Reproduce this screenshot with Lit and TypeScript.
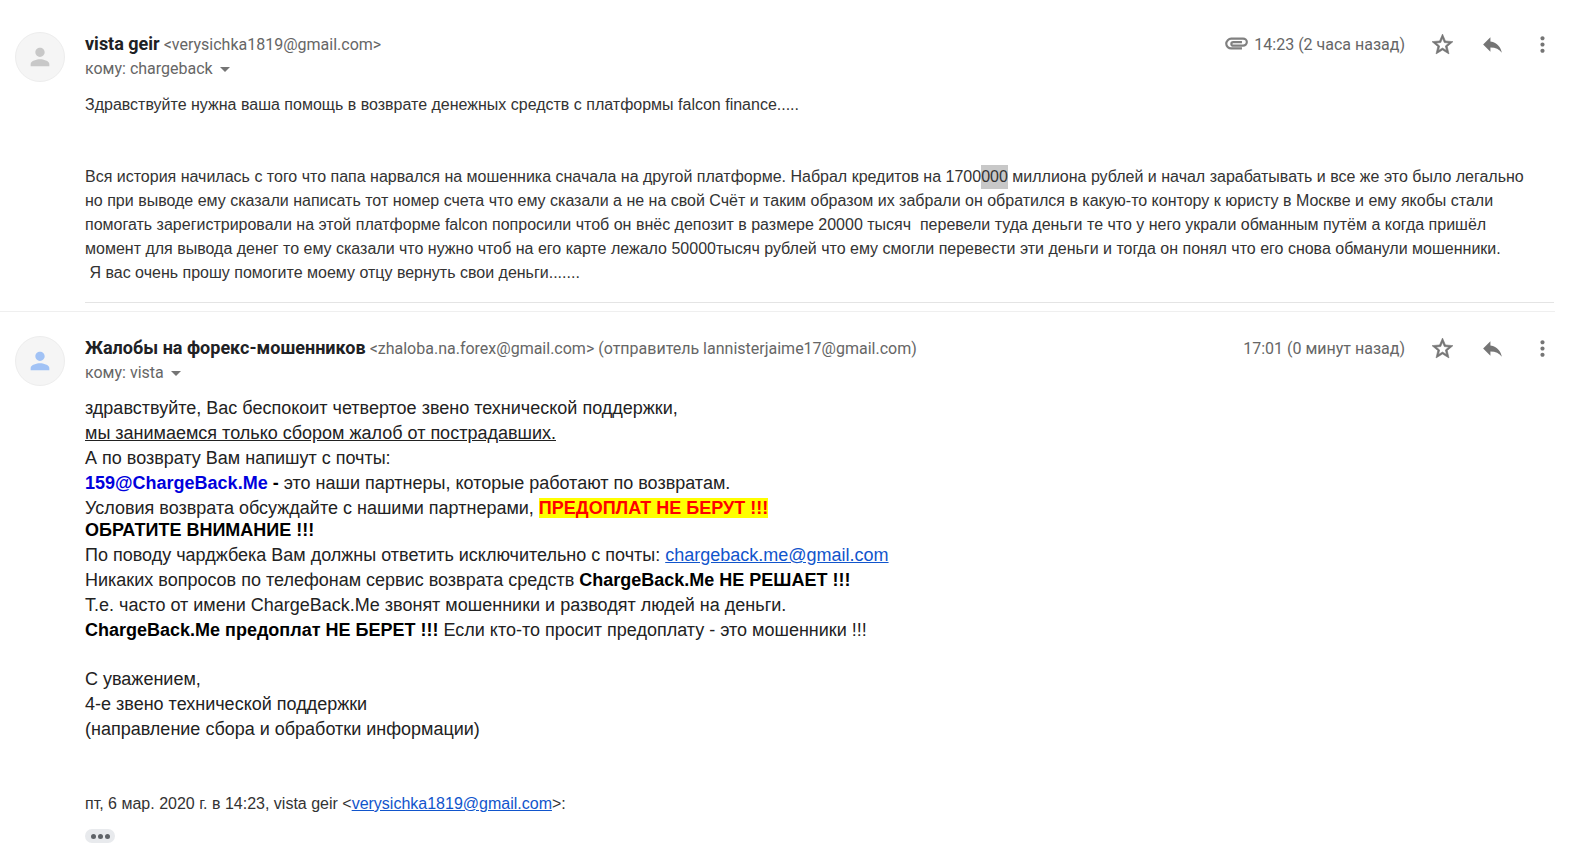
import { LitElement, html, css, svg, nothing } from "lit";
import { customElement, property } from "lit/decorators.js";

const icon = (d: string) => svg`<path d=${d}></path>`;
const STAR = "M22 9.24l-7.19-.62L12 2 9.19 8.63 2 9.24l5.46 4.73L5.82 21 12 17.27 18.18 21l-1.63-7.03L22 9.24zM12 15.4l-3.76 2.27 1-4.28-3.32-2.88 4.38-.38L12 6.1l1.71 4.04 4.38.38-3.32 2.88 1 4.28L12 15.4z";
const REPLY = "M10 9V5l-7 7 7 7v-4.1c5 0 8.5 1.6 11 5.1-1-5-4-10-11-11z";
const DOTS = "M12 8c1.1 0 2-.9 2-2s-.9-2-2-2-2 .9-2 2 .9 2 2 2zm0 2c-1.1 0-2 .9-2 2s.9 2 2 2 2-.9 2-2-.9-2-2-2zm0 6c-1.1 0-2 .9-2 2s.9 2 2 2 2-.9 2-2-.9-2-2-2z";
const CLIP = "M17.5 16H7.500C5.300 16 3 14.300 3 11.800S5.300 7 7.500 7H18.500c1.900 0 3.500 1.300 3.500 3.200s-1.600 3.300-3.500 3.300H9.500c-1 0-1.800-.7-1.800-1.600s.8-1.600 1.800-1.600H17.500";
const PERSON = "M12 12c2.210 0 4-1.790 4-4s-1.790-4-4-4-4 1.790-4 4 1.790 4 4 4zm0 2c-2.670 0-8 1.340-8 4v2h16v-2c0-2.660-5.330-4-8-4z";

@customElement("mail-message")
class MailMessage extends LitElement {
  @property() sender = "";
  @property() address = "";
  @property() to = "";
  @property() time = "";
  @property({ type: Boolean }) attachment = false;
  @property({ type: Boolean }) active = false;

  static styles = css`
    :host { display: block; }
    .message { display: grid; grid-template-columns: 50px minmax(0, 1fr); column-gap: 20px; padding-left: 15px; }
    .avatar { width: 50px; height: 50px; border-radius: 50%; background: #f5f5f5; display: grid; place-items: center; box-sizing: border-box; border: 1px solid #ededed; }
    .avatar svg { width: 28px; height: 28px; fill: #c8c8c8; }
    .avatar.active svg { fill: #a1c2f5; }
    .head { display: flex; padding-right: 6px; height: 48px; font-family: Roboto, sans-serif; color: #666; }
    .who { flex: 1; min-width: 0; }
    .row { line-height: 24px; font-size: 16px; display: flex; align-items: baseline; gap: 4px; }
    h3 { margin: 0; font-size: 18px; line-height: 24px; font-weight: 700; color: #202124; }
    .to { all: unset; display: flex; align-items: center; line-height: 24px; font-size: 16px; cursor: pointer; }
    .to svg { width: 24px; height: 24px; fill: #757575; }
    .meta { display: flex; align-items: center; height: 24px; font-size: 16px; }
    .clip { width: 26px; height: 26px; margin-right: 5px; fill: none; stroke: #808080; stroke-width: 2; }
    .time { margin-right: 12px; }
    .act { width: 50px; height: 24px; padding: 0; border: 0; background: none; display: grid; place-items: center; cursor: pointer; }
    .act svg { width: 25px; height: 25px; fill: #757575; }
    .act .star { stroke: #757575; stroke-width: 0.6; }
    .body { grid-column: 2; padding-top: 11px; margin-right: 19px; }
  `;

  render() {
    return html`<article class="message">
      <div class="avatar ${this.active ? "active" : ""}"><svg viewBox="0 0 24 24" aria-hidden="true">${icon(PERSON)}</svg></div>
      <header class="head">
        <div class="who">
          <div class="row"><h3>${this.sender}</h3><span>${this.address}</span></div>
          <button class="to" type="button"><span>кому: ${this.to}</span><svg viewBox="0 0 24 24" aria-hidden="true">${icon("M7 10l5 5 5-5z")}</svg></button>
        </div>
        <div class="meta">
          ${this.attachment ? html`<svg class="clip" viewBox="0 0 24 24" aria-hidden="true">${icon(CLIP)}</svg>` : nothing}
          <span class="time">${this.time}</span>
          <button class="act" type="button" aria-label="Пометить"><svg class="star" viewBox="0 0 24 24">${icon(STAR)}</svg></button>
          <button class="act" type="button" aria-label="Ответить"><svg viewBox="0 0 24 24">${icon(REPLY)}</svg></button>
          <button class="act" type="button" aria-label="Ещё"><svg viewBox="0 0 24 24">${icon(DOTS)}</svg></button>
        </div>
      </header>
      <div class="body"><slot></slot></div>
    </article>`;
  }
}

@customElement("app-root")
class AppRoot extends LitElement {
  static styles = css`
    :host { display: block; background: #fff; padding-top: 32px; font-family: "Liberation Sans", Arial, sans-serif; }
    p { margin: 0; }
    .plain { font-size: 16px; line-height: 24px; color: #333; }
    .story { margin-top: 48px; padding-right: 20px; }
    .first { padding-bottom: 17px; border-bottom: 1px solid #e4e4e4; }
    .separator { border: 0; border-top: 1px solid #efefef; margin: 8px 18px 24px 0; }
    .selected { display: inline-block; line-height: 24px; background: #c8c8c8; }
    .line { font-size: 18px; line-height: 22px; padding-top: 3px; color: #222; }
    .line b { color: #000; }
    .tight { padding-top: 0; }
    .space { margin-top: 24px; }
    .line .partner { color: #00d; }
    .line .warn { color: #f00; background: #ff0; }
    a { color: #15c; }
    .quote { margin-top: 52px; }
    .more { display: flex; align-items: center; justify-content: center; gap: 2px; width: 30px; height: 14px; margin-top: 13px; padding: 0; border: 0; border-radius: 7px; background: #e8eaed; cursor: pointer; }
    .dot { width: 5px; height: 5px; border-radius: 50%; background: #5f6368; }
  `;

  render() {
    return html`
      <mail-message sender="vista geir" address="<verysichka1819@gmail.com>" to="chargeback" time="14:23 (2 часа назад)" attachment>
        <div class="plain first">
          <p>Здравствуйте нужна ваша помощь в возврате денежных средств с платформы falcon finance.....</p>
          <p class="story">Вся история начилась с того что папа нарвался на мошенника сначала на другой платформе. Набрал кредитов на 1700<span class="selected">000</span> миллиона рублей и начал зарабатывать и все же это было легально но при выводе ему сказали написать тот номер счета что ему сказали а не на свой Счёт и таким образом их забрали он обратился в какую-то контору к юристу в Москве и ему якобы стали помогать зарегистрировали на этой платформе falcon попросили чтоб он внёс депозит в размере 20000 тысяч&nbsp; перевели туда деньги те что у него украли обманным путём а когда пришёл момент для вывода денег то ему сказали что нужно чтоб на его карте лежало 50000тысяч рублей что ему смогли перевести эти деньги и тогда он понял что его снова обманули мошенники.</p>
          <p>&nbsp;Я вас очень прошу помогите моему отцу вернуть свои деньги.......</p>
        </div>
      </mail-message>
      <hr class="separator">
      <mail-message sender="Жалобы на форекс-мошенников" address="<zhaloba.na.forex@gmail.com> (отправитель lannisterjaime17@gmail.com)" to="vista" time="17:01 (0 минут назад)" active>
        <p class="line tight">здравствуйте, Вас беспокоит четвертое звено технической поддержки,</p>
        <p class="line"><u>мы занимаемся только сбором жалоб от пострадавших.</u></p>
        <p class="line">А по возврату Вам напишут с почты:</p>
        <p class="line"><b class="partner">159@ChargeBack.Me</b><b> -</b> это наши партнеры, которые работают по возвратам.</p>
        <p class="line">Условия возврата обсуждайте с нашими партнерами, <b class="warn">ПРЕДОПЛАТ НЕ БЕРУТ !!!</b></p>
        <p class="line tight"><b>ОБРАТИТЕ ВНИМАНИЕ !!!</b></p>
        <p class="line">По поводу чарджбека Вам должны ответить исключительно с почты: <a href="mailto:chargeback.me@gmail.com">chargeback.me@gmail.com</a></p>
        <p class="line">Никаких вопросов по телефонам сервис возврата средств <b>ChargeBack.Me НЕ РЕШАЕТ !!!</b></p>
        <p class="line">Т.е. часто от имени ChargeBack.Me звонят мошенники и разводят людей на деньги.</p>
        <p class="line"><b>ChargeBack.Me предоплат НЕ БЕРЕТ !!!</b> Если кто-то просит предоплату - это мошенники !!!</p>
        <p class="line space">С уважением,</p>
        <p class="line">4-е звено технической поддержки</p>
        <p class="line">(направление сбора и обработки информации)</p>
        <p class="plain quote">пт, 6 мар. 2020 г. в 14:23, vista geir &lt;<a href="mailto:verysichka1819@gmail.com">verysichka1819@gmail.com</a>&gt;:</p>
        <button class="more" type="button" aria-label="Показать сокращённый текст"><span class="dot"></span><span class="dot"></span><span class="dot"></span></button>
      </mail-message>`;
  }
}
